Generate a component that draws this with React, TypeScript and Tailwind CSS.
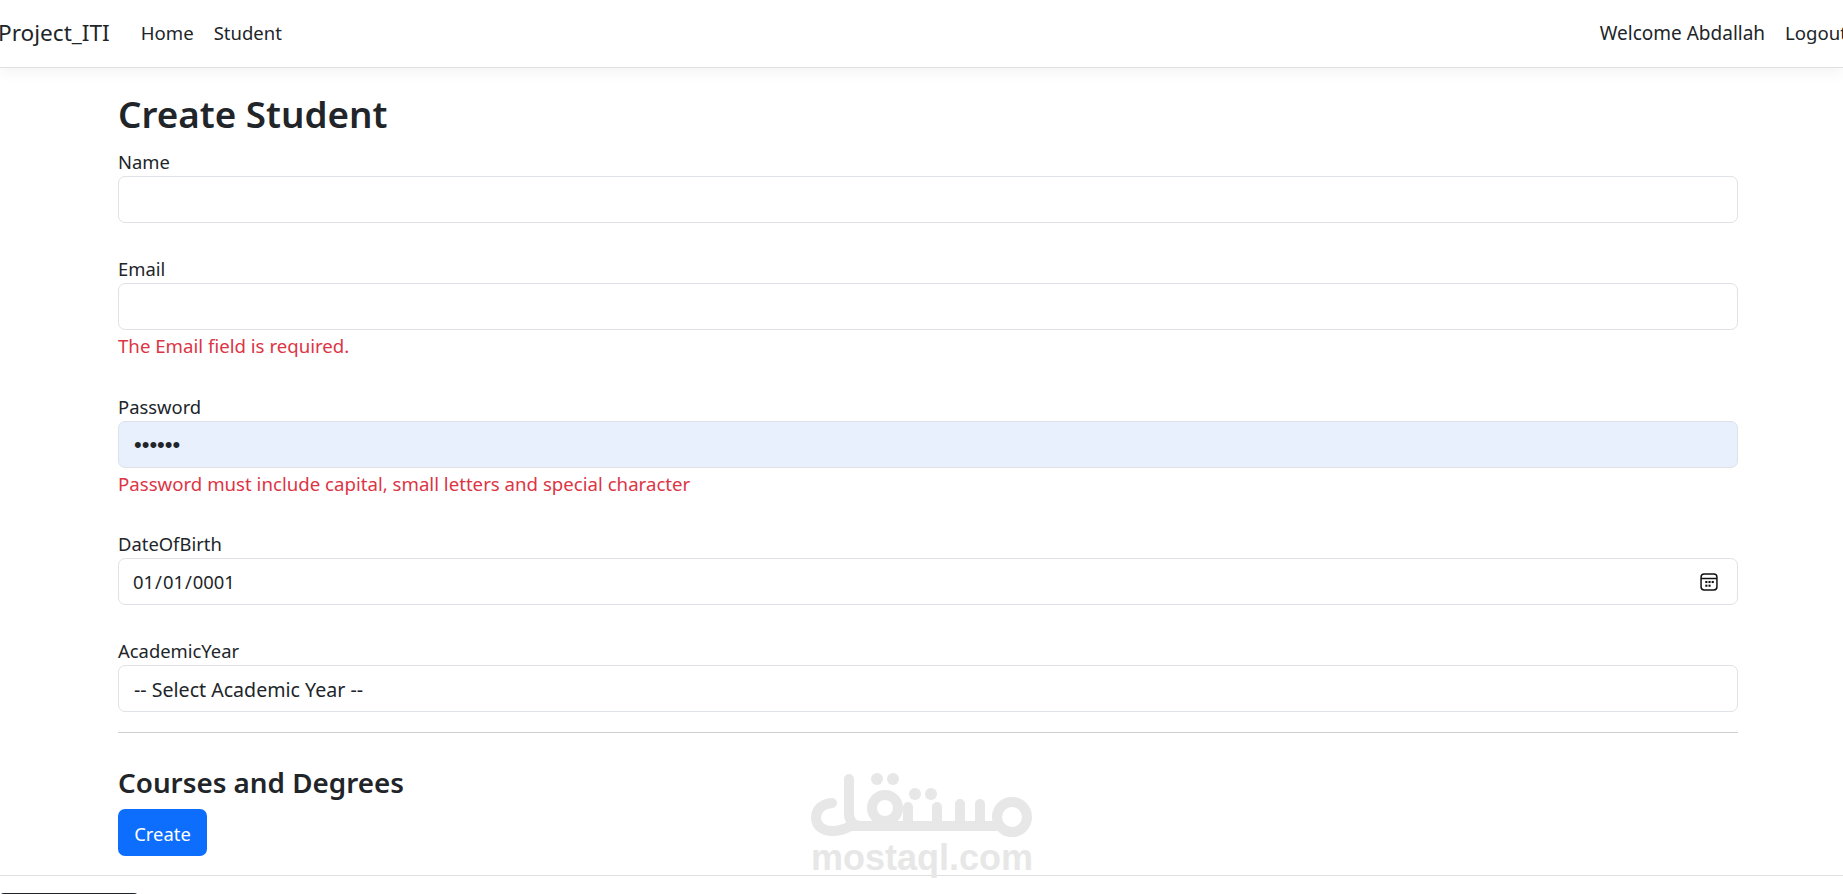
import React from 'react';

const labelClass = 'block h-[30px] text-[18.4px] leading-[32px] text-[#212529]';
const fieldClass =
  'block w-full h-[47px] rounded-[7px] border border-[#dee2e6] bg-white text-[#212529] outline-none';
const inputClass = `${fieldClass} px-[15px] text-[18.4px]`;
const errorClass = 'h-[31px] text-[18.65px] leading-[31px] text-[#dc3545]';

const CalendarIcon: React.FC = () => (
  <svg
    className="pointer-events-none absolute right-[20px] top-1/2 -translate-y-1/2"
    width="18"
    height="18"
    viewBox="0 0 17 17"
    fill="none"
    stroke="#111"
    strokeWidth="1.4"
  >
    <rect x="1" y="1" width="15" height="15" rx="3" />
    <path d="M1 5.2 H16" />
    <g fill="#111" stroke="none">
      <rect x="5" y="7.5" width="2" height="2" />
      <rect x="8" y="7.5" width="2" height="2" />
      <rect x="11" y="7.5" width="2" height="2" />
      <rect x="5" y="11" width="2" height="2" />
      <rect x="8" y="11" width="2" height="2" />
    </g>
  </svg>
);

const MostaqlMark: React.FC = () => (
  <div className="absolute left-[811px] top-[773px] flex w-[222px] flex-col items-center text-[#e7e7e7]">
    <svg width="222" height="67" viewBox="0 0 222 67" fill="none" stroke="currentColor" strokeWidth="10" strokeLinecap="round">
      <path d="M21 30 C10 31 5 37 5 45 C5 53 12 58 22 58 C30 58 36 55 40 53 L186 53" />
      <path d="M38 6 L38 40 C38 48 42 53 50 53" />
      <circle cx="74" cy="35" r="13" />
      <path d="M97 34 L97 52 M126 34 L126 52 M149 31 L149 52 M169 31 L169 52" />
      <circle cx="201" cy="44" r="15" />
      <g fill="currentColor" stroke="none">
        <circle cx="66" cy="6" r="6" />
        <circle cx="82" cy="6" r="6" />
        <circle cx="104" cy="21" r="6" />
        <circle cx="120" cy="21" r="6" />
      </g>
    </svg>
    <span className="font-['Liberation_Sans',sans-serif] text-[36px] font-bold leading-[36px]">mostaql.com</span>
  </div>
);

const App: React.FC = () => {
  return (
    <div className="relative h-[894px] w-full overflow-hidden bg-white font-['Noto_Sans',sans-serif] text-[#212529]">
      <nav className="flex h-[68px] items-center border-b border-[#dfdfe3] bg-white pb-[2px] shadow-[0_4px_14px_rgba(0,0,0,0.05)]">
        <span className="ml-[-2px] text-[22.6px]">Project_ITI</span>
        <a className="ml-[31px] text-[18.6px]">Home</a>
        <a className="ml-[20px] text-[18.5px]">Student</a>
        <a className="ml-auto pt-[2px] text-[19px]">Welcome Abdallah</a>
        <a className="ml-[20px] mr-[-4px] text-[18.6px]">Logout</a>
      </nav>

      <main className="mx-[118px] w-[1620px]">
        <h1 className="mt-[18px] h-[56px] text-[36.8px] font-semibold leading-[56px]">Create Student</h1>
        <form>
          <div className="mt-[4px]">
            <label className={labelClass}>Name</label>
            <input className={inputClass} />
          </div>
          <div className="mt-[30px]">
            <label className={labelClass}>Email</label>
            <input className={inputClass} />
            <p className={errorClass}>The Email field is required.</p>
          </div>
          <div className="mt-[30px]">
            <label className={labelClass}>Password</label>
            <input
              type="password"
              readOnly
              value="123456"
              className={`${fieldClass} px-[15px] font-['Liberation_Sans',sans-serif] text-[22px] !bg-[#e8f0fe]`}
            />
            <p className={errorClass}>Password must include capital, small letters and special character</p>
          </div>
          <div className="mt-[29px]">
            <label className={labelClass}>DateOfBirth</label>
            <div className="relative">
              <input
                type="date"
                defaultValue="0001-01-01"
                className={`${fieldClass} pl-[13px] pr-[15px] text-[18.4px] [&::-webkit-calendar-picker-indicator]:opacity-0`}
              />
              <CalendarIcon />
            </div>
          </div>
          <div className="mt-[30px]">
            <label className={labelClass}>AcademicYear</label>
            <select className={`${fieldClass} appearance-none px-[15px] pt-[2px] text-[19.6px]`}>
              <option>-- Select Academic Year --</option>
            </select>
          </div>
          <hr className="mt-[20px] border-t border-[#cfcfd3]" />
          <h2 className="mt-[30px] h-[46px] text-[27.8px] font-semibold leading-[38px]">Courses and Degrees</h2>
          <button
            type="button"
            className="block h-[47px] w-[89px] rounded-[7px] bg-[#0d6efd] pt-[2px] text-[18.4px] text-white"
          >
            Create
          </button>
        </form>
      </main>

      <footer className="mt-[19px] h-[18px] border-t border-[#dedee3]" />
      <div className="h-[4px] w-[138px] rounded-t-[4px] bg-[#212529]" />

      <MostaqlMark />
    </div>
  );
};

export default App;
